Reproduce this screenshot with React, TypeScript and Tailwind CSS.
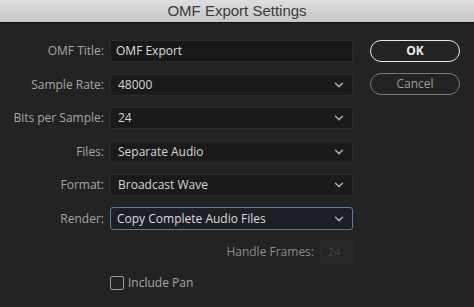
import React from "react";

const Chevron = () => (
  <svg width="10" height="6" viewBox="0 0 10 6" className="shrink-0">
    <path d="M1.5 1.2 L5 4.6 L8.5 1.2" fill="none" stroke="#a9a9a9" strokeWidth="1.5" strokeLinecap="round" />
  </svg>
);

const Row = ({ label, children }: { label: string; children: React.ReactNode }) => (
  <div className="flex h-[22px] items-center">
    <div className="w-[105px] pr-[1px] text-right text-[12px] font-medium text-[#a6a6a6]">{label}</div>
    <div className="ml-[5px] w-[243px]">{children}</div>
  </div>
);

const Select = ({ value, active }: { value: string; active?: boolean }) => (
  <div
    className={
      active
        ? "flex h-[23px] items-center justify-between rounded-[3px] border border-[#5b7aa6] bg-[#1c1f26] pl-[6px] pr-[8px] text-[12px] font-medium text-[#dcdcdc]"
        : "flex h-[22px] items-center justify-between rounded-[2px] border border-[#2b2b2b] bg-[#1b1b1b] pl-[7px] pr-[8px] text-[12px] font-medium text-[#d6d6d6]"
    }
  >
    <span>{value}</span>
    <Chevron />
  </div>
);

export default function App() {
  return (
    <div className="h-[307px] w-[474px] overflow-hidden bg-[#232323]" style={{ fontFamily: '"Open Sans", sans-serif' }}>
      <div
        className="flex h-[23px] items-center justify-center border-b border-[#111] bg-gradient-to-b from-[#dedede] to-[#c6c6c6] text-[15px] text-[#3b3b3b]"
        style={{ fontFamily: '"Liberation Sans", Arial, sans-serif' }}
      >
        OMF Export Settings
      </div>
      <div className="flex pt-[17px]">
        <div className="flex flex-col gap-[11.5px]">
          <Row label="OMF Title:">
            <div className="flex h-[22px] items-center rounded-[2px] border border-[#2b2b2b] bg-[#181818] pl-[5px] text-[12px] font-medium text-[#dcdcdc]">
              OMF Export
            </div>
          </Row>
          <Row label="Sample Rate:">
            <Select value="48000" />
          </Row>
          <Row label="Bits per Sample:">
            <Select value="24" />
          </Row>
          <Row label="Files:">
            <Select value="Separate Audio" />
          </Row>
          <Row label="Format:">
            <Select value="Broadcast Wave" />
          </Row>
          <Row label="Render:">
            <Select value="Copy Complete Audio Files" active />
          </Row>
          <div className="flex h-[22px] items-center justify-end">
            <span className="mr-[6px] text-[12px] font-medium text-[#8c8c8c]">Handle Frames:</span>
            <div className="flex h-[22px] w-[33px] items-center rounded-[2px] border border-[#2a2a2a] bg-[#262626] pl-[7px] text-[11px] text-[#424242]">
              24
            </div>
          </div>
          <div className="flex h-[16px] items-center pl-[110px]">
            <div className="h-[14px] w-[14px] rounded-[2px] border-[1.5px] border-[#9a9a9a]" />
            <span className="ml-[4px] text-[12px] font-medium text-[#a6a6a6]">Include Pan</span>
          </div>
        </div>
        <div className="ml-[17px] flex flex-col gap-[11px]">
          <button className="flex h-[22px] w-[90px] items-center justify-center rounded-full border-[1.5px] border-[#e6e6e6] text-[12px] font-bold text-[#ececec]">
            OK
          </button>
          <button className="flex h-[22px] w-[90px] items-center justify-center rounded-full border-[1.5px] border-[#7a7a7a] text-[12px] font-medium text-[#9d9d9d]">
            Cancel
          </button>
        </div>
      </div>
    </div>
  );
}
